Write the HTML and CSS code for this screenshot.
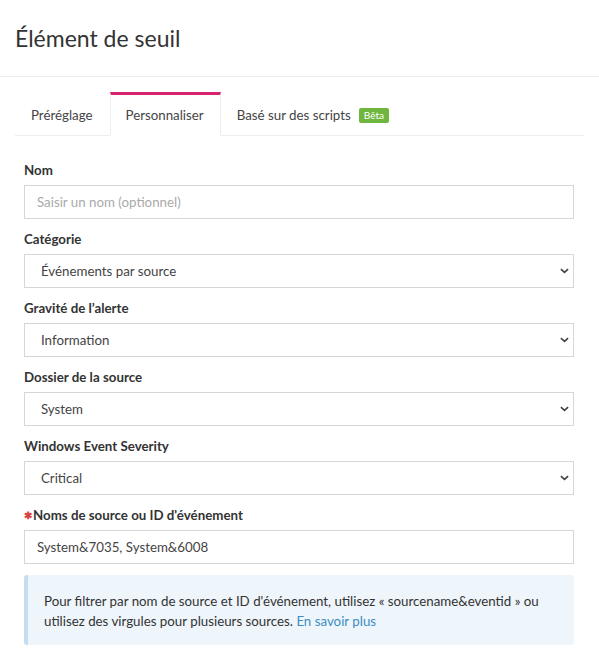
FILE: index.html
```html
<!DOCTYPE html>
<html lang="fr">
<head>
<meta charset="utf-8">
<title>Élément de seuil</title>
<link rel="stylesheet" href="styles.css">
</head>
<body>
<header class="header">
  <h1 class="title">Élément de seuil</h1>
</header>
<nav class="tabs">
  <a class="tab">Préréglage</a>
  <a class="tab tab-active">Personnaliser</a>
  <a class="tab">Basé sur des scripts <span class="badge">Bêta</span></a>
</nav>
<form class="form">
  <div class="group">
    <label class="label">Nom</label>
    <input class="control input" type="text" placeholder="Saisir un nom (optionnel)">
  </div>
  <div class="group">
    <label class="label">Catégorie</label>
    <div class="select">Événements par source<svg class="chev" viewBox="0 0 10 6" width="9" height="6"><path d="M1 1l4 3.6L9 1" fill="none" stroke="#444" stroke-width="1.8"/></svg></div>
  </div>
  <div class="group">
    <label class="label">Gravité de l’alerte</label>
    <div class="select">Information<svg class="chev" viewBox="0 0 10 6" width="9" height="6"><path d="M1 1l4 3.6L9 1" fill="none" stroke="#444" stroke-width="1.8"/></svg></div>
  </div>
  <div class="group">
    <label class="label">Dossier de la source</label>
    <div class="select">System<svg class="chev" viewBox="0 0 10 6" width="9" height="6"><path d="M1 1l4 3.6L9 1" fill="none" stroke="#444" stroke-width="1.8"/></svg></div>
  </div>
  <div class="group">
    <label class="label">Windows Event Severity</label>
    <div class="select">Critical<svg class="chev" viewBox="0 0 10 6" width="9" height="6"><path d="M1 1l4 3.6L9 1" fill="none" stroke="#444" stroke-width="1.8"/></svg></div>
  </div>
  <div class="group group-last">
    <label class="label"><span class="req">✱</span>Noms de source ou ID d'événement</label>
    <input class="control input" type="text" value="System&amp;7035, System&amp;6008">
  </div>
  <div class="info">
    <p class="info-text">Pour filtrer par nom de source et ID d'événement, utilisez « sourcename&amp;eventid » ou utilisez des virgules pour plusieurs sources. <a class="link">En savoir plus</a></p>
  </div>
</form>
</body>
</html>
```
FILE: styles.css
```css
* { box-sizing: border-box; }
body {
  margin: 0;
  background: #fff;
  font-family: Lato, "Liberation Sans", sans-serif;
  font-size: 13.3px;
  color: #333;
}
.header {
  height: 77px;
  padding: 0 15px;
  border-bottom: 1px solid #ececec;
  display: flex;
  align-items: center;
}
.title {
  margin: 0;
  font-size: 23px;
  font-weight: 400;
  color: #333;
}
.tabs {
  margin: 15px 15px 0;
  height: 44px;
  display: flex;
  border-bottom: 1px solid #eee;
}
.tab {
  display: flex;
  align-items: center;
  padding: 0 16px 0 15px;
  color: #444;
  border: 1px solid transparent;
  border-top: 3px solid transparent;
  margin-bottom: -1px;
}
.tab-active {
  border-color: #eee;
  border-top-color: #d6246e;
  border-bottom-color: #fff;
  background: #fff;
}
.badge {
  margin-left: 8px;
  background: #6fb63f;
  color: #fff;
  font-size: 10px;
  line-height: 15px;
  padding: 0 5px;
  border-radius: 2px;
}
.form {
  padding: 24px 25px 0 24px;
}
.group {
  margin-bottom: 10px;
}
.group-last {
  margin-bottom: 11px;
}
.label {
  display: block;
  font-weight: 700;
  line-height: 20px;
  margin-bottom: 5px;
  color: #333;
}
.req {
  color: #d9413b;
  font-size: 10px;
  margin-right: 1px;
  vertical-align: 1px;
}
.control {
  display: block;
  width: 100%;
  height: 34px;
  border: 1px solid #d6d6d6;
  background: #fff;
  font-family: inherit;
  font-size: 13.3px;
  color: #444;
}
.input {
  padding: 0 12px;
  outline: none;
}
.input::placeholder { color: #aaa; }
.select {
  display: flex;
  align-items: center;
  justify-content: space-between;
  height: 34px;
  border: 1px solid #d6d6d6;
  padding: 0 4px 0 16px;
  color: #444;
}
.chev { display: block; }
.info {
  background: #eef5fb;
  border-left: 4px solid #c6ddf0;
  border-radius: 3px;
  padding: 16px 16px 14px 16px;
}
.info-text {
  margin: 0;
  line-height: 20px;
  color: #333;
}
.link { color: #3b8ec4; }
```
